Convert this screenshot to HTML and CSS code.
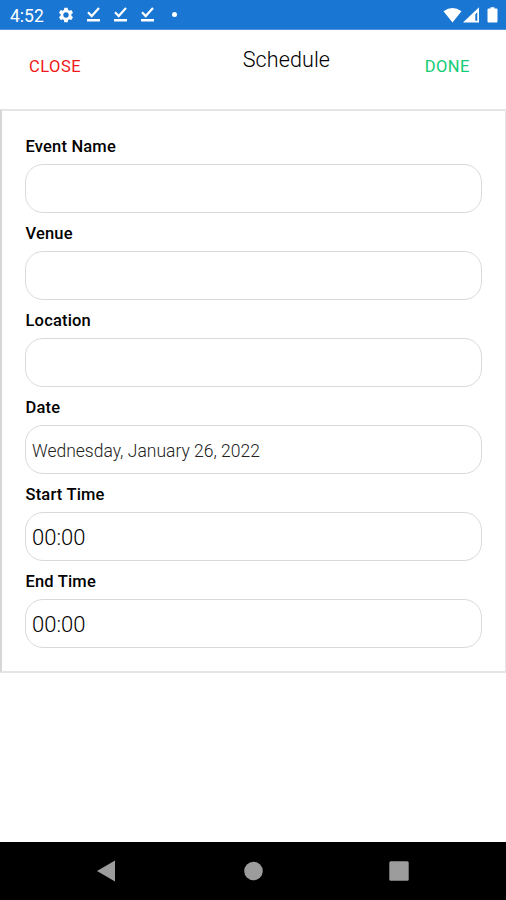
FILE: index.html
```html
<!DOCTYPE html>
<html lang="en">
<head>
  <meta charset="UTF-8">
  <meta name="viewport" content="width=device-width, initial-scale=1">
  <title>Schedule</title>
  <link rel="stylesheet" href="styles.css">
</head>
<body>
  <div class="status-bar">
    <span class="clock">4:52</span>
    <svg class="gear" width="18" height="18" viewBox="0 0 24 24"><path fill="#fff" d="M19.14 12.94c.04-.3.06-.61.06-.94 0-.32-.02-.64-.07-.94l2.03-1.58a.49.49 0 0 0 .12-.61l-1.92-3.32a.49.49 0 0 0-.59-.22l-2.39.96c-.5-.38-1.03-.7-1.62-.94l-.36-2.54a.48.48 0 0 0-.48-.41h-3.84a.48.48 0 0 0-.47.41l-.36 2.54c-.59.24-1.13.57-1.62.94l-2.39-.96a.48.48 0 0 0-.59.22L2.74 8.87a.48.48 0 0 0 .12.61l2.03 1.58c-.05.3-.09.63-.09.94s.02.64.07.94l-2.03 1.58a.49.49 0 0 0-.12.61l1.92 3.32c.12.22.37.29.59.22l2.39-.96c.5.38 1.03.7 1.62.94l.36 2.54c.05.24.24.41.48.41h3.84c.24 0 .44-.17.47-.41l.36-2.54c.59-.24 1.13-.56 1.62-.94l2.39.96c.22.08.47 0 .59-.22l1.92-3.32a.48.48 0 0 0-.12-.61zM12 15.6a3.6 3.6 0 1 1 0-7.2 3.6 3.6 0 0 1 0 7.2z"/></svg>
    <svg class="check" width="15" height="17" viewBox="0 0 15 17"><path fill="none" stroke="#fff" stroke-width="2.2" d="M2 6.2l3.7 3.9L13 2"/><path fill="#fff" d="M1 13h13v2.5H1z"/></svg>
    <svg class="check" width="15" height="17" viewBox="0 0 15 17"><path fill="none" stroke="#fff" stroke-width="2.2" d="M2 6.2l3.7 3.9L13 2"/><path fill="#fff" d="M1 13h13v2.5H1z"/></svg>
    <svg class="check" width="15" height="17" viewBox="0 0 15 17"><path fill="none" stroke="#fff" stroke-width="2.2" d="M2 6.2l3.7 3.9L13 2"/><path fill="#fff" d="M1 13h13v2.5H1z"/></svg>
    <span class="dot"></span>
    <svg class="signals" width="56" height="18" viewBox="0 0 56 18">
      <path fill="#fff" d="M0.5 5.2Q9.5-1.3 18.5 5.2L9.5 16.5z"/>
      <path fill="#fff" fill-rule="evenodd" d="M20 16.5L36 1.2V16.5zM32.3 8.2v6.6h2V6.2z"/>
      <path fill="#fff" d="M45.5 2.6h2V1.2h4v1.4h2q1 0 1 1v12q0 1-1 1h-8q-1 0-1-1v-12q0-1 1-1z"/>
    </svg>
  </div>

  <div class="header">
    <button class="close">CLOSE</button>
    <h1>Schedule</h1>
    <button class="done">DONE</button>
  </div>

  <form class="form">
    <label for="eventName">Event Name</label>
    <input id="eventName" type="text">
    <label for="venue">Venue</label>
    <input id="venue" type="text">
    <label for="location">Location</label>
    <input id="location" type="text">
    <label for="date">Date</label>
    <input id="date" class="date" type="text" value="Wednesday, January 26, 2022">
    <label for="startTime">Start Time</label>
    <input id="startTime" class="time" type="text" value="00:00">
    <label for="endTime">End Time</label>
    <input id="endTime" class="time" type="text" value="00:00">
  </form>

  <div class="nav-bar">
    <svg width="20" height="22" viewBox="0 0 20 22"><path fill="#9c9c9c" d="M1 11L19 .5v21z"/></svg>
    <svg width="20" height="20" viewBox="0 0 20 20"><circle cx="10.5" cy="10" r="9.3" fill="#9c9c9c"/></svg>
    <svg width="20" height="20" viewBox="0 0 20 20"><rect x=".3" y=".3" width="19.4" height="19.4" rx="1.5" fill="#9c9c9c"/></svg>
  </div>
</body>
</html>
```
FILE: styles.css
```css
* {
  box-sizing: border-box;
}
body {
  margin: 0;
  height: 100vh;
  display: flex;
  flex-direction: column;
  background: #fff;
  font-family: Roboto, "Liberation Sans", sans-serif;
  color: #000;
  overflow: hidden;
}
.status-bar {
  height: 30px;
  flex: none;
  display: flex;
  align-items: center;
  padding: 0 7px 0 10px;
  background: #1976d2;
  border-bottom: 1px solid #4c92dc;
  color: #fff;
}
.clock {
  width: 47px;
  font-size: 17.5px;
  line-height: 30px;
  padding-top: 2px;
}
.gear {
  margin-right: 11px;
}
.check {
  margin-right: 12px;
}
.dot {
  width: 5px;
  height: 5px;
  margin-left: 5px;
  border-radius: 50%;
  background: #fff;
}
.signals {
  margin-left: auto;
}
/* Header */
.header {
  height: 79px;
  flex: none;
  display: flex;
  justify-content: space-between;
  align-items: flex-start;
  padding: 17px 36px 0 29px;
}
.header h1 {
  margin: 0 0 0 67px;
  font-size: 21.5px;
  font-weight: 300;
  line-height: 25px;
  letter-spacing: 0.1px;
}
.header button {
  margin: 9px 0 0;
  padding: 0;
  border: none;
  background: none;
  font-family: inherit;
  font-size: 16.5px;
  line-height: 22px;
  letter-spacing: 0.5px;
}
.header .close {
  color: #f01818;
}
.header .done {
  color: #10cc74;
}
/* Form */
.form {
  height: 564px;
  flex: none;
  padding: 15px 23px 0 23px;
  border: 2px solid #e4e6e6;
  border-left-color: #d6d6d6;
  border-right-width: 1px;
}
.form label {
  display: block;
  height: 38px;
  padding: 10px 0 0 0.5px;
  font-size: 16.5px;
  font-weight: 500;
  line-height: 22px;
  letter-spacing: 0.18px;
}
.form input {
  display: block;
  width: 457px;
  height: 49px;
  padding: 2px 6px 0;
  border: 1.5px solid #d8dada;
  border-radius: 18px;
  background: #fff;
  font-family: inherit;
  font-weight: 300;
  color: #000;
  outline: none;
}
.form .date {
  padding-top: 3px;
  font-size: 17.5px;
  color: #222;
}
.form .time {
  font-size: 22px;
}
/* Android navigation */
.nav-bar {
  height: 58px;
  flex: none;
  margin-top: auto;
  display: flex;
  justify-content: space-between;
  align-items: center;
  padding: 0 97px 0 96px;
  background: #000;
}
```
